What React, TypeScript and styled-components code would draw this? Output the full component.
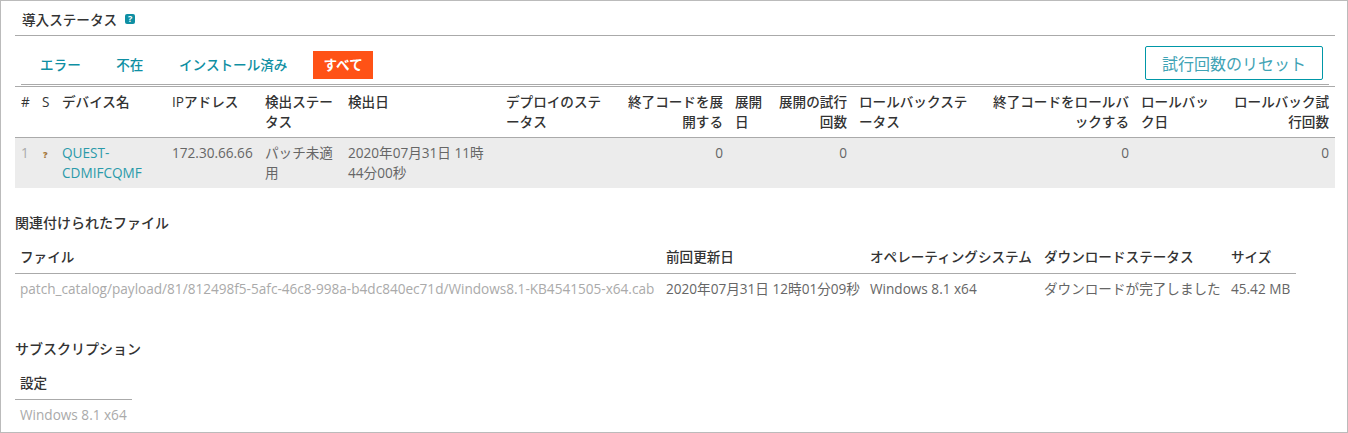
import React from 'react'
import styled, { createGlobalStyle } from 'styled-components'

const GlobalStyle = createGlobalStyle`
  html, body {
    margin: 0;
    padding: 0;
    background: #fff;
  }
  body {
    font-family: "Open Sans", "Noto Sans CJK JP", sans-serif;
    font-size: 13.6px;
    color: #333;
  }
`

const deployHeaders: [string, number, boolean][] = [
  ['#', 21, false],
  ['S', 20, false],
  ['デバイス名', 110, false],
  ['IPアドレス', 93, false],
  ['検出ステー\nタス', 83, false],
  ['検出日', 158, false],
  ['デプロイのステ\nータス', 122, false],
  ['終了コードを展\n開する', 107, true],
  ['展開\n日', 44, false],
  ['展開の試行\n回数', 80, true],
  ['ロールバックステ\nータス', 134, false],
  ['終了コードをロールバ\nックする', 148, true],
  ['ロールバッ\nク日', 93, false],
  ['ロールバック試\n行回数', 107, true],
]

const fileHeaders: [string, number][] = [
  ['ファイル', 646],
  ['前回更新日', 204],
  ['オペレーティングシステム', 174],
  ['ダウンロードステータス', 187],
  ['サイズ', 70],
]

const App = () => {
  return (
    <>
      <GlobalStyle />
      <Frame>
        <TitleBar>
          <Title>導入ステータス</Title>
          <HelpBadge>?</HelpBadge>
        </TitleBar>
        <TabBar>
          <Tabs>
            <Tab>エラー</Tab>
            <Tab>不在</Tab>
            <Tab>インストール済み</Tab>
            <Tab $active>すべて</Tab>
          </Tabs>
          <ResetButton>試行回数のリセット</ResetButton>
        </TabBar>
        <DeployTable>
          <colgroup>
            {deployHeaders.map(([label, width]) => (
              <col key={label} width={width} />
            ))}
          </colgroup>
          <thead>
            <tr>
              {deployHeaders.map(([label, , right]) => (
                <Th key={label} $right={right}>
                  {label}
                </Th>
              ))}
            </tr>
          </thead>
          <tbody>
            <GreyRow>
              <Td $muted>1</Td>
              <Td>
                <StatusIcon>?</StatusIcon>
              </Td>
              <Td>
                <DeviceLink>{'QUEST-\nCDMIFCQMF'}</DeviceLink>
              </Td>
              <Td>172.30.66.66</Td>
              <Td>{'パッチ未適\n用'}</Td>
              <Td>{'2020年07月31日 11時\n44分00秒'}</Td>
              <Td />
              <Td $right>0</Td>
              <Td />
              <Td $right>0</Td>
              <Td />
              <Td $right>0</Td>
              <Td />
              <Td $right>0</Td>
            </GreyRow>
          </tbody>
        </DeployTable>

        <SectionTitle>関連付けられたファイル</SectionTitle>
        <PlainTable $width={1281}>
          <colgroup>
            {fileHeaders.map(([label, width]) => (
              <col key={label} width={width} />
            ))}
          </colgroup>
          <thead>
            <tr>
              {fileHeaders.map(([label]) => (
                <PlainTh key={label} $tall>
                  {label}
                </PlainTh>
              ))}
            </tr>
          </thead>
          <tbody>
            <tr>
              <PlainTd $muted>
                patch_catalog/payload/81/812498f5-5afc-46c8-998a-b4dc840ec71d/Windows8.1-KB4541505-x64.cab
              </PlainTd>
              <PlainTd>2020年07月31日 12時01分09秒</PlainTd>
              <PlainTd>Windows 8.1 x64</PlainTd>
              <PlainTd>ダウンロードが完了しました</PlainTd>
              <PlainTd>45.42 MB</PlainTd>
            </tr>
          </tbody>
        </PlainTable>

        <SubscriptionTitle>サブスクリプション</SubscriptionTitle>
        <PlainTable $width={117}>
          <thead>
            <tr>
              <PlainTh>設定</PlainTh>
            </tr>
          </thead>
          <tbody>
            <tr>
              <PlainTd $muted>Windows 8.1 x64</PlainTd>
            </tr>
          </tbody>
        </PlainTable>
      </Frame>
    </>
  )
}

const Frame = styled.div`
  box-sizing: border-box;
  width: 1348px;
  height: 433px;
  padding: 0 12px 0 14px;
  border: 1px solid #bbb;
  overflow: hidden;
`

const TitleBar = styled.div`
  display: flex;
  align-items: center;
  gap: 8px;
  box-sizing: border-box;
  height: 35px;
  padding: 2px 0 0 7px;
  border-bottom: 1px solid #aaa;
`

const Title = styled.div`
  color: #333;
  font-weight: 500;
`

const HelpBadge = styled.span`
  width: 10px;
  height: 10px;
  border-radius: 2px;
  background: #0f8fa3;
  color: #fff;
  font-size: 9px;
  font-weight: 700;
  line-height: 10px;
  text-align: center;
`

const TabBar = styled.div`
  display: flex;
  align-items: flex-start;
  justify-content: space-between;
  box-sizing: border-box;
  height: 49px;
  margin-left: 6px;
  padding: 10px 6px 0 9px;
  margin-right: 6px;
  border-bottom: 1px solid #aaa;
`

const Tabs = styled.div`
  display: flex;
  gap: 15.5px;
  margin-top: 5px;
`

const Tab = styled.div<{ $active?: boolean }>`
  height: 28px;
  padding: 0 ${(p) => (p.$active ? 10.5 : 10)}px;
  line-height: 28px;
  color: ${(p) => (p.$active ? '#fff' : '#0f8fa3')};
  background: ${(p) => (p.$active ? '#ff5216' : 'transparent')};
  font-weight: ${(p) => (p.$active ? 700 : 500)};
`

const ResetButton = styled.button`
  box-sizing: border-box;
  width: 178px;
  height: 34px;
  padding: 0;
  background: #fff;
  border: 1px solid #0097a7;
  border-radius: 2px;
  color: #3fa3b5;
  font-family: inherit;
  font-size: 16px;
`

const DeployTable = styled.table`
  width: 1320px;
  margin-top: 1px;
  table-layout: fixed;
  border-collapse: collapse;
  border-top: 1px solid #aaa;
`

const Th = styled.th<{ $right?: boolean }>`
  box-sizing: border-box;
  height: 51px;
  padding: 5px 6px 0;
  vertical-align: top;
  text-align: ${(p) => (p.$right ? 'right' : 'left')};
  line-height: 20px;
  font-weight: 500;
  color: #333;
  white-space: pre;
  border-bottom: 1px solid #aaa;
`

const GreyRow = styled.tr`
  background: #ececec;
`

const Td = styled.td<{ $right?: boolean; $muted?: boolean }>`
  box-sizing: border-box;
  height: 50px;
  padding: 5px 6px 0;
  vertical-align: top;
  text-align: ${(p) => (p.$right ? 'right' : 'left')};
  line-height: 20px;
  color: ${(p) => (p.$muted ? '#aaa' : '#666')};
  white-space: pre-line;
`

const StatusIcon = styled.span`
  margin-left: 1px;
  color: #a5773a;
  font-size: 9px;
  font-weight: 800;
`

const DeviceLink = styled.span`
  color: #2a9aaa;
`

const SectionTitle = styled.div`
  margin-top: 25px;
  height: 20px;
  line-height: 20px;
  font-size: 14px;
  font-weight: 500;
  color: #333;
`

const SubscriptionTitle = styled(SectionTitle)`
  margin-top: 40px;
`

const PlainTable = styled.table<{ $width: number }>`
  width: ${(p) => p.$width}px;
  margin-top: 10px;
  table-layout: fixed;
  border-collapse: collapse;
`

const PlainTh = styled.th<{ $tall?: boolean }>`
  box-sizing: border-box;
  height: ${(p) => (p.$tall ? 31 : 30)}px;
  padding: 4px 5px 0;
  text-align: left;
  vertical-align: top;
  line-height: 20px;
  font-weight: 500;
  color: #333;
  border-bottom: 1px solid #aaa;
`

const PlainTd = styled.td<{ $muted?: boolean }>`
  padding: 5px 5px 0;
  line-height: 20px;
  white-space: nowrap;
  color: ${(p) => (p.$muted ? '#aaa' : '#666')};
`

export default App
